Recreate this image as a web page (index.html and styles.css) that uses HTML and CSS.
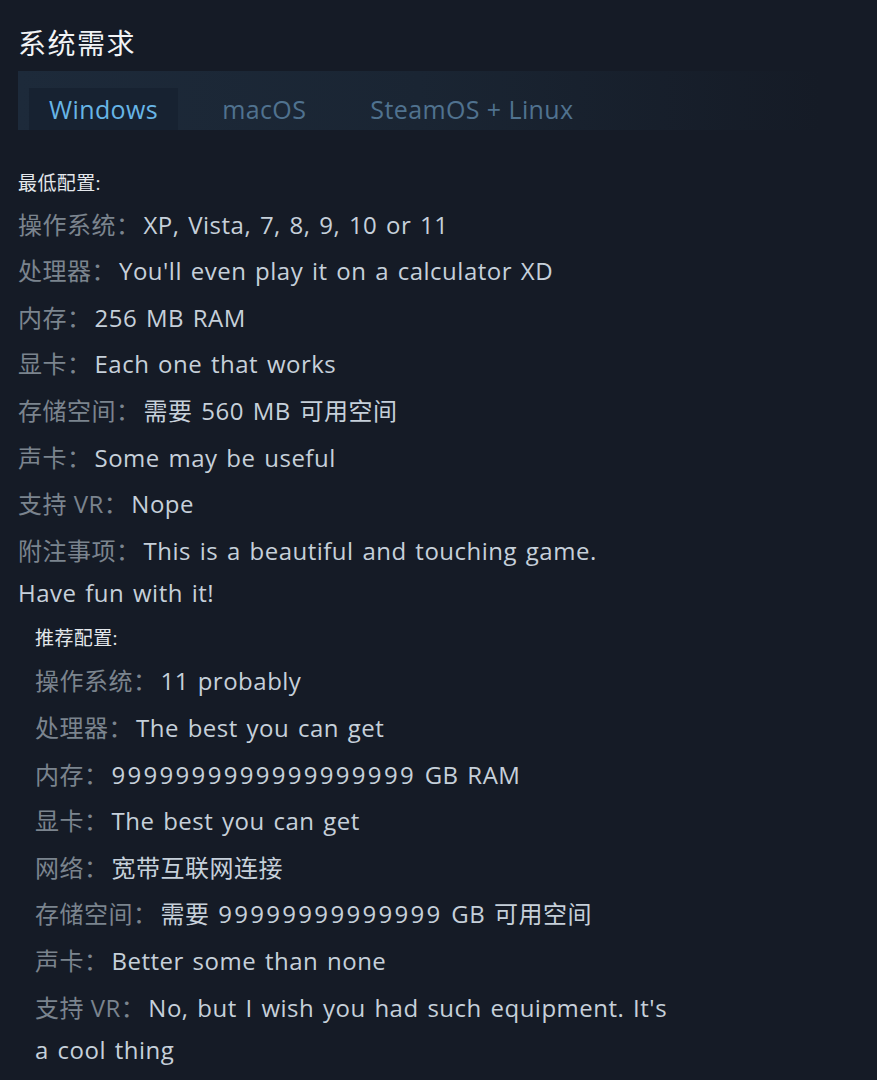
FILE: index.html
```html
<!DOCTYPE html>
<html lang="zh-CN">
<head>
    <meta charset="UTF-8">
    <meta name="viewport" content="width=device-width, initial-scale=1.0">
    <title>系统需求</title>
    <link rel="stylesheet" href="styles.css">
</head>
<body>
    <div class="sysreq">
        <h2 class="sysreq-title">系统需求</h2>
        <div class="os-tabs">
            <div class="os-tab active">Windows</div>
            <div class="os-tab">macOS</div>
            <div class="os-tab">SteamOS + Linux</div>
        </div>

        <div class="req-block req-min">
            <div class="req-head">最低配置:</div>
            <ul class="req-list">
                <li><span class="req-label">操作系统：</span>XP, Vista, 7, 8, 9, 10 or 11</li>
                <li><span class="req-label">处理器：</span>You'll even play it on a calculator XD</li>
                <li><span class="req-label">内存：</span>256 MB RAM</li>
                <li><span class="req-label">显卡：</span>Each one that works</li>
                <li><span class="req-label">存储空间：</span>需要 560 MB 可用空间</li>
                <li><span class="req-label">声卡：</span>Some may be useful</li>
                <li><span class="req-label">支持 VR：</span>Nope</li>
                <li><span class="req-label">附注事项：</span>This is a beautiful and touching game. Have fun with it!</li>
            </ul>
        </div>

        <div class="req-block req-rec">
            <div class="req-head">推荐配置:</div>
            <ul class="req-list">
                <li><span class="req-label">操作系统：</span>11 probably</li>
                <li><span class="req-label">处理器：</span>The best you can get</li>
                <li><span class="req-label">内存：</span><span class="digits">9999999999999999999</span> GB RAM</li>
                <li><span class="req-label">显卡：</span>The best you can get</li>
                <li><span class="req-label">网络：</span>宽带互联网连接</li>
                <li><span class="req-label">存储空间：</span>需要 <span class="digits">99999999999999</span> GB 可用空间</li>
                <li><span class="req-label">声卡：</span>Better some than none</li>
                <li><span class="req-label">支持 VR：</span>No, but I wish you had such equipment. It's a cool thing</li>
            </ul>
        </div>
    </div>
</body>
</html>
```

FILE: styles.css
```css
body { margin: 0; background-color: #151b26; font-family: "Open Sans", "Noto Sans CJK SC", sans-serif; color: #c6d0da; }
.sysreq { padding: 24px 18px 0 18px; }
.sysreq-title { margin: 0; font-size: 28px; font-weight: normal; color: #f2f4f6; line-height: 38px; letter-spacing: 1.5px; }
.os-tabs {
    display: flex;
    gap: 24px;
    margin-top: 9px;
    padding: 17px 11px 0 11px;
    width: 780px;
    height: 42px;
    background: linear-gradient(to right, #1d2a3a 0%, #1a2533 50%, rgba(26, 37, 51, 0) 100%);
}
.os-tab { padding: 0 20px; font-size: 25px; letter-spacing: 0.4px; line-height: 42px; color: #50728f; }
.os-tab.active { background-color: #172231; color: #67b5e6; }

.req-block { margin-top: 40px; }
.req-head { font-size: 19px; line-height: 26px; color: #e4e8ec; letter-spacing: 0.4px; }
.req-list { list-style: none; margin: 3px 0 0 0; padding: 0; }
.req-list li { font-size: 24px; line-height: 42px; padding-top: 4.6px; letter-spacing: 0.5px; word-spacing: 2px; }
.req-label { color: #7b848e; margin-right: 3px; word-spacing: 0; }
.digits { letter-spacing: 2.3px; }

.req-min { width: 610px; }
.req-rec { margin-top: 11px; margin-left: 17px; width: 635px; }
.req-rec .req-list { margin-top: 5px; }
```
